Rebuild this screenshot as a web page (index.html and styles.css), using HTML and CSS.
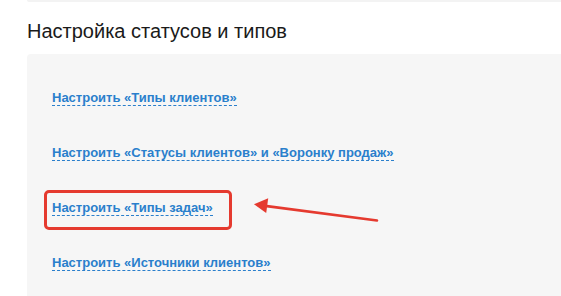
FILE: index.html
```
<!DOCTYPE html>
<html lang="ru">
  <head>
    <meta charset="UTF-8" />
    <meta name="viewport" content="width=device-width, initial-scale=1.0" />
    <title>Настройка статусов и типов</title>
    <link rel="stylesheet" href="styles.css">
  </head>
  <body>
    <div class="page">
      <div class="top-strip"></div>
      <h2 class="section-title">Настройка статусов и типов</h2>
      <div class="settings-panel">
        <div class="settings-item">
          <a href="#" class="dash-link">Настроить «Типы клиентов»</a>
        </div>
        <div class="settings-item">
          <a href="#" class="dash-link">Настроить «Статусы клиентов» и «Воронку продаж»</a>
        </div>
        <div class="settings-item highlighted">
          <a href="#" class="dash-link">Настроить «Типы задач»</a>
          <span class="highlight-box"></span>
        </div>
        <div class="settings-item">
          <a href="#" class="dash-link">Настроить «Источники клиентов»</a>
        </div>
      </div>

      <!-- annotation arrow -->
      <svg class="arrow" width="561" height="296" viewBox="0 0 561 296">
        <line x1="377" y1="220.5" x2="263" y2="205.6" stroke="#e53a2f" stroke-width="2.6" stroke-linecap="round" />
        <polygon points="254,204.2 268.2,198.2 266.2,213" fill="#e53a2f" />
      </svg>
    </div>
  </body>
</html>
```

FILE: styles.css
```
body {
  margin: 0;
  font-family: "Liberation Sans", Arial, sans-serif;
  background: #fff;
}
.page {
  position: relative;
  padding-left: 27px;
}
.top-strip {
  height: 2px;
  background-color: #f3f3f3;
  border-radius: 0 0 0 3px;
}
.section-title {
  margin: 17px 0 11px;
  font-size: 20px;
  line-height: 24px;
  font-weight: normal;
  color: #1a1a1a;
}
.settings-panel {
  background-color: #f6f6f6;
  border-radius: 4px 0 0 0;
  padding: 36px 25px 25px;
  display: flex;
  flex-direction: column;
  gap: 39px;
}
.settings-item {
  position: relative;
  line-height: 16px;
  font-size: 13px;
}
.dash-link {
  color: #2a7fcc;
  font-weight: bold;
  text-decoration: none;
  border-bottom: 1px dashed #2a7fcc;
}
.highlight-box {
  position: absolute;
  left: -8px;
  top: -10px;
  width: 182px;
  height: 34px;
  border: 3px solid #e53a2f;
  border-radius: 5px;
}
.arrow {
  position: absolute;
  left: 0;
  top: 0;
  pointer-events: none;
}
```
